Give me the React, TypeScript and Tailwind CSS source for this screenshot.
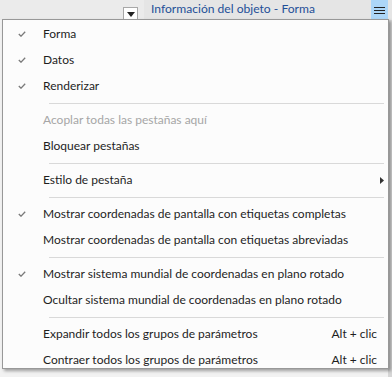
import React from "react";

const Check = () => (
  <svg width="8" height="6" viewBox="0 0 8 6" className="block">
    <path d="M0.8 3 L3 5.2 L7.2 0.8" fill="none" stroke="#7a7a7a" strokeWidth="1.3" />
  </svg>
);

type Item = {
  type: "item";
  label: string;
  checked?: boolean;
  disabled?: boolean;
  submenu?: boolean;
  shortcut?: string;
};
type Sep = { type: "sep" };

const items: (Item | Sep)[] = [
  { type: "item", label: "Forma", checked: true },
  { type: "item", label: "Datos", checked: true },
  { type: "item", label: "Renderizar", checked: true },
  { type: "sep" },
  { type: "item", label: "Acoplar todas las pestañas aquí", disabled: true },
  { type: "item", label: "Bloquear pestañas" },
  { type: "sep" },
  { type: "item", label: "Estilo de pestaña", submenu: true },
  { type: "sep" },
  { type: "item", label: "Mostrar coordenadas de pantalla con etiquetas completas", checked: true },
  { type: "item", label: "Mostrar coordenadas de pantalla con etiquetas abreviadas" },
  { type: "sep" },
  { type: "item", label: "Mostrar sistema mundial de coordenadas en plano rotado", checked: true },
  { type: "item", label: "Ocultar sistema mundial de coordenadas en plano rotado" },
  { type: "sep" },
  { type: "item", label: "Expandir todos los grupos de parámetros", shortcut: "Alt + clic" },
  { type: "item", label: "Contraer todos los grupos de parámetros", shortcut: "Alt + clic" },
];

export default function App() {
  return (
    <div
      className="relative w-[392px] h-[377px] overflow-hidden bg-[#f2f2f2] text-[12px]"
      style={{ fontFamily: 'Lato, "Open Sans", sans-serif' }}
    >
      {/* top bar */}
      <div className="flex h-[20px]">
        <div className="w-[144px] bg-[#ebebeb] flex items-end pl-[123px]">
          <div className="w-[15px] h-[13px] bg-white border border-[#a8a8a8] border-b-0 flex items-center justify-center">
            <svg width="8" height="5" viewBox="0 0 8 5">
              <path d="M0 0 L8 0 L4 5 Z" fill="#222" />
            </svg>
          </div>
        </div>
        <div className="flex-1 bg-[#e5e5e5] flex items-center pl-[7px]">
          <span className="text-[12.1px] text-[#1f4f98] leading-none flex-1 pb-[1px]">
            Información del objeto - Forma
          </span>
          <div className="w-[17px] h-[20px] bg-[#acd6f8] flex flex-col items-center justify-center gap-[2px] mr-[4px]">
            <div className="w-[11px] h-[1px] bg-[#222]" />
            <div className="w-[11px] h-[1px] bg-[#222]" />
            <div className="w-[11px] h-[1px] bg-[#222]" />
          </div>
        </div>
      </div>
      {/* right scroll strip */}
      <div className="absolute right-0 top-[20px] w-[4px] h-[357px] bg-[#d6d6d6]" />

      {/* menu */}
      <div className="absolute left-[2px] top-[19px] w-[387px] h-[350px] overflow-hidden bg-[#fcfcfc] border border-[#989898] shadow-[2px_2px_3px_rgba(0,0,0,0.35)] pt-[1px]">
        {items.map((it, i) =>
          it.type === "sep" ? (
            <div key={i} className="h-[8px] flex items-center">
              <div className="ml-[46px] mr-[4px] flex-1 h-[1px] bg-[#d9d9d9]" />
            </div>
          ) : (
            <div key={i} className="h-[26px] flex items-center">
              <div className="w-[40px] flex justify-center pl-[2px] pr-[4px]">
                {it.checked ? <Check /> : null}
              </div>
              <span
                className={
                  "flex-1 whitespace-nowrap " +
                  (it.disabled ? "text-[#a6a6a6]" : "text-[#1e1e1e]")
                }
              >
                {it.label}
              </span>
              {it.shortcut ? (
                <span className="text-[#1e1e1e] pr-[11px] whitespace-nowrap">{it.shortcut}</span>
              ) : null}
              {it.submenu ? (
                <svg width="4" height="7" viewBox="0 0 4 7" className="mr-[4px]">
                  <path d="M0 0 L4 3.5 L0 7 Z" fill="#333" />
                </svg>
              ) : null}
            </div>
          )
        )}
      </div>
    </div>
  );
}
